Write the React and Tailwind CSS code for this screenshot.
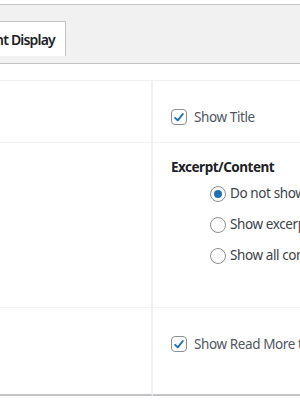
import React from "react";

function Checkbox({ label }) {
    return (
        <label className="flex items-center gap-[7px] whitespace-nowrap">
            <span className="flex items-center justify-center w-4 h-4 shrink-0 rounded-[4px] border border-[#8c8f94] bg-white">
                <svg viewBox="0 0 20 20" className="w-[15px] h-[15px]">
                    <path
                        d="M4.5 10.5 8.2 14 15.5 5"
                        fill="none"
                        stroke="#2271b1"
                        strokeWidth="2.8"
                        strokeLinecap="round"
                        strokeLinejoin="round"
                    />
                </svg>
            </span>
            <span className="text-[13.5px] tracking-[-0.4px] text-[#50575e]">{label}</span>
        </label>
    );
}

function Radio({ label, checked }) {
    return (
        <label className="flex items-center gap-[4px] whitespace-nowrap h-[31px]">
            <span className="flex items-center justify-center w-4 h-4 shrink-0 rounded-full border border-[#8c8f94] bg-white">
                {checked ? (
                    <span className="w-2 h-2 rounded-full bg-[#2271b1]" />
                ) : null}
            </span>
            <span className="text-[13.5px] tracking-[-0.4px] text-[#3c434a]">{label}</span>
        </label>
    );
}

export default function App() {
    return (
        <div
            className="w-[300px] h-[400px] overflow-hidden bg-white"
            style={{ fontFamily: '"Noto Sans", "Open Sans", sans-serif' }}
        >
            <div className="h-[4px]" />
            {/* Tab bar */}
            <div className="h-[60px] border-y border-[#c3c4c7] bg-[#f1f1f1] pt-[16px]">
                <div className="flex h-[35px] w-[66px] overflow-hidden">
                    <div className="flex items-center justify-end shrink-0 h-full w-[66px] bg-white border-t border-r border-[#c3c4c7] pr-[10px] whitespace-nowrap text-[14px] tracking-[-0.8px] font-semibold text-[#1d2327]">
                        Content Display
                    </div>
                </div>
            </div>
            <div className="h-[16px]" />
            {/* Settings table */}
            <div className="grid grid-cols-[153px_1fr] border-t border-[#f0f0f1]">
                <div className="h-[62px] border-r-2 border-b border-[#f0f0f1]" />
                <div className="h-[62px] border-b border-[#f0f0f1] pl-[18px] pt-[26px]">
                    <Checkbox label="Show Title" />
                </div>

                <div className="h-[165px] border-r-2 border-b border-[#f0f0f1]" />
                <div className="h-[165px] border-b border-[#f0f0f1] pl-[18px] pt-[14px]">
                    <div className="text-[13.5px] tracking-[-0.5px] font-bold text-[#1d2327] leading-[20px]">
                        Excerpt/Content
                    </div>
                    <div className="flex flex-col pl-[39px] pt-[1px]">
                        <Radio label="Do not show" checked />
                        <Radio label="Show excerpt" />
                        <Radio label="Show all content" />
                    </div>
                </div>

                <div className="h-[88px] border-r-2 border-r-[#f0f0f1] border-b-2 border-b-[#c3c4c7]" />
                <div className="h-[88px] border-b-2 border-b-[#c3c4c7] pl-[18px] pt-[26px]">
                    <Checkbox label="Show Read More text" />
                </div>
            </div>
        </div>
    );
}
